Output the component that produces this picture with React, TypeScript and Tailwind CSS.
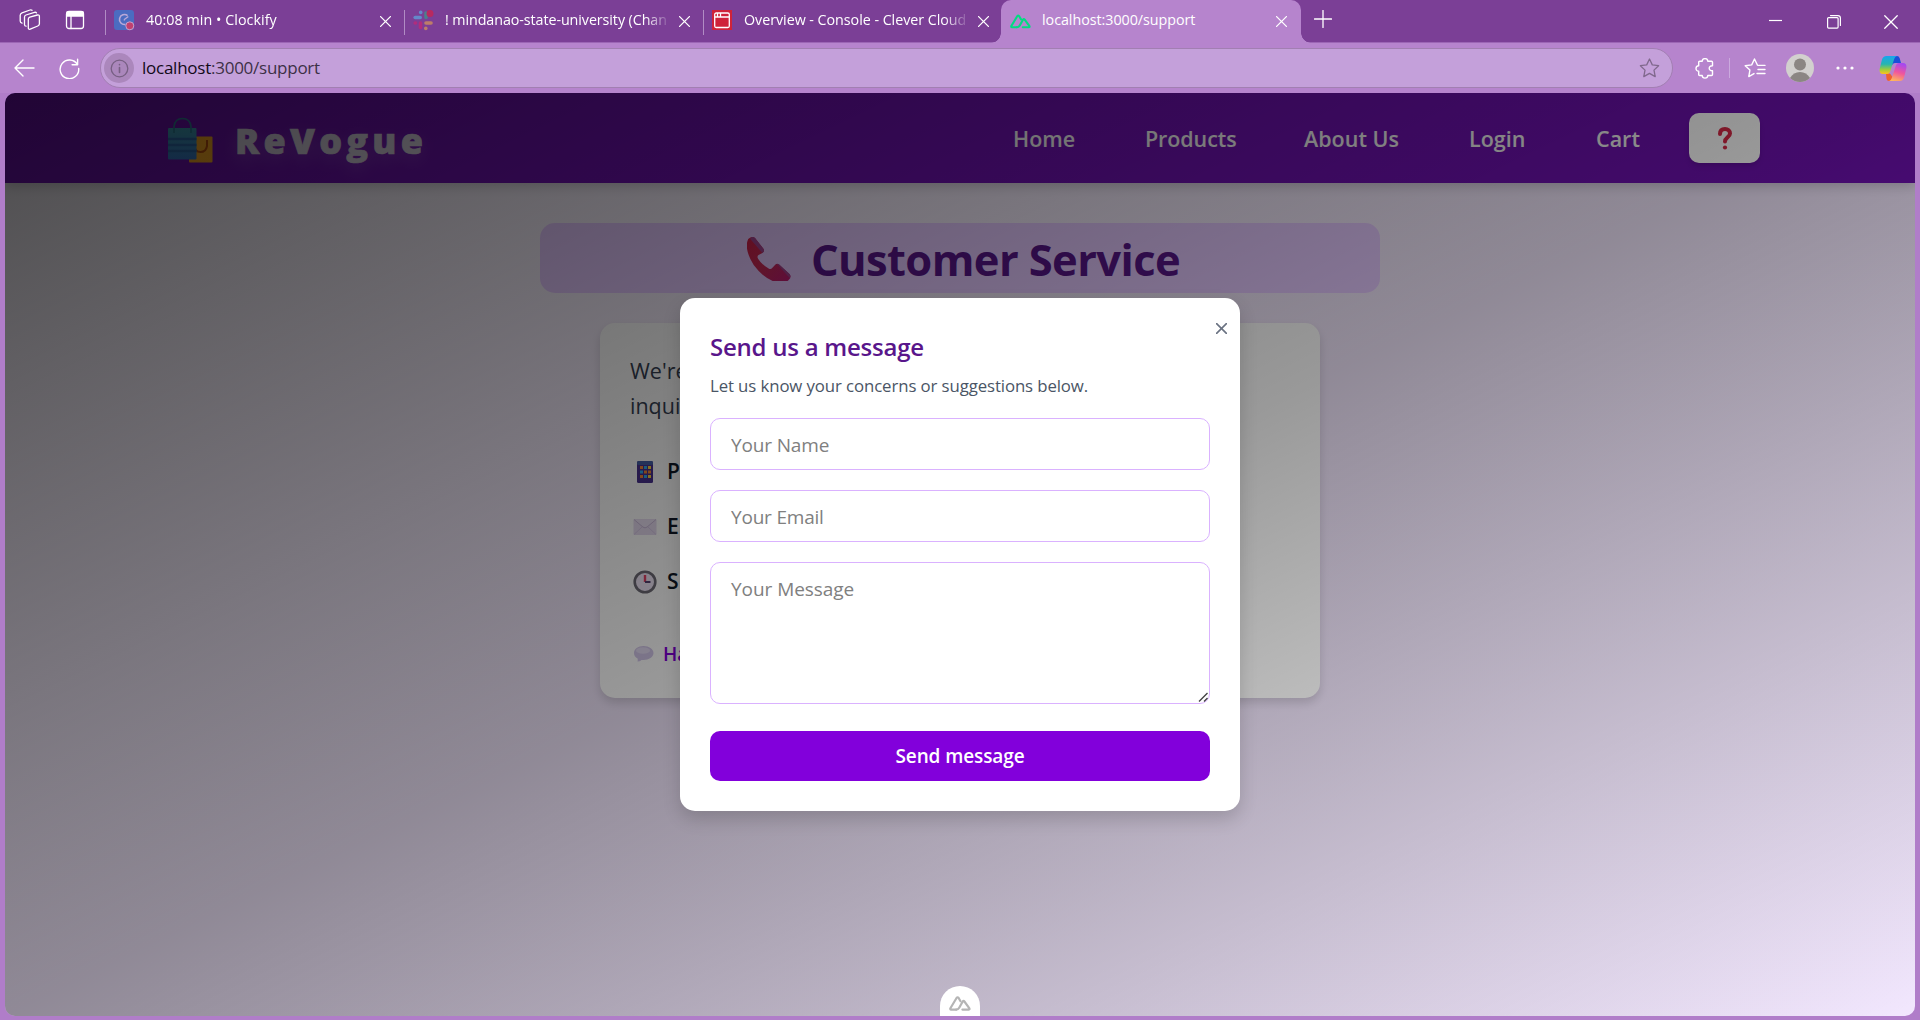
import React from "react";

const line = { fill: "none", stroke: "currentColor", strokeLinecap: "round", strokeLinejoin: "round" } as const;

function Cross({ size = 11, w = 1.3 }: { size?: number; w?: number }) {
  return (
    <svg width={size} height={size} viewBox="0 0 11 11" {...line} strokeWidth={w}>
      <path d="M.6.6l9.8 9.8M10.4.6.6 10.4" />
    </svg>
  );
}

function WorkspacesIcon() {
  return (
    <svg width="22" height="22" viewBox="0 0 22 22" {...line} strokeWidth="1.3">
      <path d="M9.300 10.100q.1-1.500 1.500-2L18.400 6q2.200-.4 2 1.600v7.300q-.1 1.500-1.600 2.100L11.200 20.200q-1.900.5-1.900-1.500z" />
      <path d="M17.500 3.900q-.7-.9-2-.5L7 6q-1.500.6-1.500 2v7.700q.1 1.500 1.600 1.500" />
      <path d="M13 1.300q-.8-.7-2-.3L3 3.800Q1.300 4.500 1.200 6.200v5.700q0 1.700 1.800 2.300" />
    </svg>
  );
}

function TabActionsIcon() {
  return (
    <svg width="20" height="20" viewBox="0 0 20 20" {...line} strokeWidth="1.3">
      <rect x="1.500" y="1.500" width="17" height="17" rx="2.500" />
      <path d="M2 2h16v4H2z" fill="currentColor" />
      <path d="M6 6v12.500" />
    </svg>
  );
}

function ClockifyIcon() {
  return (
    <svg width="21" height="21" viewBox="0 0 21 21">
      <rect width="20" height="20" rx="3" fill="#4b6cc1" />
      <path d="M13.600 5.600A5 5 0 1 0 11.500 14.400" fill="none" stroke="#b9a9d8" strokeWidth="1.600" />
      <path d="M10.300 9.500l4-3M9.700 9.800h1.300" stroke="#b9a9d8" strokeWidth="1.300" />
      <circle cx="15.800" cy="15.800" r="4" fill="#c0406f" stroke="#c9a0cf" strokeWidth="1" />
    </svg>
  );
}

function SlackIcon() {
  return (
    <svg width="21" height="21" viewBox="0 0 21 21" strokeLinecap="round" strokeWidth="3.600">
      <path d="M2.200 7.500h5" stroke="#6588c9" />
      <path d="M7.700 2.200v.3" stroke="#6588c9" />
      <path d="M13 3v4.500" stroke="#4c7f8c" />
      <path d="M7.500 13v4.500" stroke="#b02d7d" />
      <path d="M2.200 13h.3" stroke="#b02d7d" />
      <path d="M13 13h5" stroke="#bd7d68" />
      <path d="M12.800 18.200v.2" stroke="#bd7d68" />
      <circle cx="17" cy="3.400" r="3.500" fill="#b72a60" />
    </svg>
  );
}

function CleverIcon() {
  return (
    <svg width="20" height="20" viewBox="0 0 20 20" fill="none" stroke="#fff" strokeWidth="1.300">
      <rect width="20" height="20" fill="#cf2339" stroke="none" />
      <rect x="2.700" y="3" width="14.600" height="14.500" rx="1.500" />
      <path d="M2.700 7h14.600M5.500 3v4M8.500 3v4" />
    </svg>
  );
}

function NuxtMark({ w, h, stroke = 2 }: { w: number; h: number; stroke?: number }) {
  return (
    <svg width={w} height={h} viewBox="0 0 22 15" {...line} strokeWidth={stroke}>
      <path d="M7.200 13.600H2.200q-1.300-.2-.8-1.400L7.700 1.800q.9-1.100 1.800 0l2 3.400" />
      <path d="M7.200 13.600q2 0 3-1.800L13.700 5.500q.8-1.200 1.700 0l5 6.900q.5 1-.7 1.200h-6.300" />
    </svg>
  );
}

function ShoppingBags() {
  return (
    <svg width="46" height="46" viewBox="0 0 46 46">
      <defs>
        <linearGradient id="bag" x1="0" y1="0" x2="0" y2="1">
          <stop offset="0" stopColor="#3f9fb4" />
          <stop offset="1" stopColor="#3779c6" />
        </linearGradient>
      </defs>
      <rect x="22" y="19.500" width="23.500" height="26" rx="1" fill="#f7a823" />
      <path d="M27.500 23v6q.5 6 6 6t6.500-6v-6" fill="none" stroke="#b9500e" strokeWidth="2" />
      <rect x="1" y="11" width="28.500" height="31.500" rx="1" fill="url(#bag)" />
      <path d="M1 22h28.500M1 28h28.500M1 34h28.500" stroke="#2f6cab" strokeWidth="2.400" />
      <path d="M7 16V9.500Q8 1.500 15.500 1.500T24 9.500V16" fill="none" stroke="#2e7f98" strokeWidth="1.700" />
    </svg>
  );
}

function Phone() {
  return (
    <svg width="45" height="45" viewBox="1 0 37 42.500" preserveAspectRatio="none">
      <defs>
        <linearGradient id="ph" x1="0" y1="0" x2="1" y2="1">
          <stop offset="0" stopColor="#d01f48" />
          <stop offset=".5" stopColor="#c92c58" />
          <stop offset="1" stopColor="#c01a78" />
        </linearGradient>
      </defs>
      <path d="M2 2.800Q5-.3 7.600 1.800L14.500 12q1.400 2.400-.8 4L10.500 18q-1.500 1.300-.4 3.400 3.300 6 9 9.600 1.600.8 2.800-.9l2.500-3.200q1.300-1.300 3-.1l8.500 9q2.100 2.500-.5 5.500-2.500 3.500-8.500 3Q15 41 6.500 27.500-1.800 12 2 2.800z" fill="url(#ph)" />
      <path d="M3.500 2.500 5 1q1.500-.5 2.600.8L14.500 12q1.400 2.400-.8 4zM25.700 26.500q.9-.4 1.700.3l8.500 9q1.300 1.700.2 3.900z" fill="#a34592" />
    </svg>
  );
}

function MobileEmoji() {
  return (
    <svg width="24" height="24" viewBox="0 0 24 24">
      <rect x="4" y="1" width="16" height="22" rx="1.500" fill="#4a3291" />
      <rect x="4" y="1" width="16" height="4" rx="1.500" fill="#4560a8" />
      <g fill="#f58a35">
        <path d="M7 6h3v3H7zM15 10.500h3v3h-3zM11 10.500h3v3h-3zM7 15h3v3H7z" />
      </g>
      <g fill="#2fb0f0">
        <path d="M11 6h3v3h-3zM7 10.500h3v3H7zM11 15h3v3h-3z" />
      </g>
      <path d="M15 6h3v3h-3zM15 15h3v3h-3z" fill="#ffd53f" />
    </svg>
  );
}

function MailEmoji() {
  return (
    <svg width="24" height="24" viewBox="0 0 24 24">
      <rect x=".5" y="4" width="23" height="16" rx="1" fill="#e6dbf0" />
      <path d="M1 19.500l8-7.500M23 19.500l-8-7.500" stroke="#d6c7e6" />
      <path d="M1 4.500l9 7.600q2 1.500 4 0l9-7.600" fill="#ebe1f4" stroke="#c9b8d8" />
    </svg>
  );
}

function ClockEmoji() {
  return (
    <svg width="24" height="24" viewBox="0 0 24 24">
      <circle cx="12" cy="12" r="10.300" fill="#efe6f7" stroke="#6f6c77" strokeWidth="2.600" />
      <path d="M12 12V5" stroke="#e34165" strokeWidth="2.400" />
      <path d="M12 12h5.500" stroke="#554273" strokeWidth="2" />
    </svg>
  );
}

function SpeechEmoji() {
  return (
    <svg width="21" height="18" viewBox="0 0 21 18">
      <path d="M10.500 1C16 1 20.500 4 20.500 8s-4.500 7-10 7q-1 0-2-.1Q7 16.500 4.500 16.500 5 15 4.600 13.500 1 11.500 1 8c0-4 4-7 9.500-7z" fill="#d3c7ea" />
      <ellipse cx="10" cy="5.500" rx="7" ry="3.300" fill="#e4dcf4" />
    </svg>
  );
}

function Copilot() {
  return (
    <svg width="28" height="27" viewBox="0 0 28 27">
      <defs>
        <linearGradient id="ca" x1="0" y1="0" x2="0" y2="1">
          <stop offset="0" stopColor="#18a4ee" />
          <stop offset=".45" stopColor="#27b5b0" />
          <stop offset=".75" stopColor="#9dcc3d" />
          <stop offset="1" stopColor="#ffc21a" />
        </linearGradient>
        <linearGradient id="cb" x1=".6" y1="0" x2=".3" y2="1">
          <stop offset="0" stopColor="#a548f0" />
          <stop offset=".5" stopColor="#f0569c" />
          <stop offset="1" stopColor="#ffb65c" />
        </linearGradient>
      </defs>
      <path d="M14 1h4q2 0 2.700 2.300L22 8h-6q-2.500 0-3.300 2.700z" fill="#1a4fd8" />
      <path d="M7 18.500h4l2.500 3.500L12.500 26H10q-2 0-2.500-2z" fill="#f0602f" />
      <path d="M7.500 1H18q-2 .3-2.800 3L11 17q-.7 2-3 2H4q-4 0-3.400-5L3 4.500Q4 1 7.500 1z" fill="url(#ca)" />
      <path d="M20.500 26H10q2-.3 2.800-3L17 10q.7-2 3-2h4q4 0 3.400 5L25 22.500Q24 26 20.500 26z" fill="url(#cb)" />
      <path d="M15.300 8.500h2.200q-1 .5-1.500 2L13 19h-3q1.200-.3 1.700-1.800z" fill="#b684cd" />
    </svg>
  );
}

function Tab({ icon, title, tracking }: { icon: React.ReactNode; title: string; tracking: string }) {
  return (
    <div className="flex h-[42px] w-[299px] items-center">
      <div className="mb-[-2px] h-[25px] w-px bg-[#b18cc4]" />
      <div className="ml-[8px] mb-[2px] w-[21px]">{icon}</div>
      <div className={`ml-[11px] mb-[2px] w-[223px] overflow-hidden whitespace-nowrap [mask-image:linear-gradient(to_right,black_200px,transparent_226px)] ${tracking}`}>{title}</div>
      <div className="ml-[11px]"><Cross /></div>
    </div>
  );
}

function TitleBar() {
  return (
    <div className="flex h-[43px] border-b border-[#9c66b5] bg-[#7b3f96] text-[14.3px] text-white">
      <div className="flex w-[105px] items-center pl-[19px] pb-[3px]">
        <WorkspacesIcon />
        <div className="ml-[24px]"><TabActionsIcon /></div>
      </div>
      <Tab icon={<ClockifyIcon />} title="40:08 min • Clockify" tracking="tracking-[0.05px]" />
      <Tab icon={<SlackIcon />} title="! mindanao-state-university (Chan" tracking="tracking-[-0.08px]" />
      <Tab icon={<CleverIcon />} title="Overview - Console - Clever Cloud" tracking="tracking-[-0.04px]" />
      <div className="relative -mr-px flex h-[43px] w-[300px] items-center rounded-t-[10px] bg-[#b684cd] pb-px -ml-[1px]">
        <div className="absolute bottom-0 -left-[10px] size-[10px] bg-[radial-gradient(circle_at_0_0,transparent_9.5px,#b684cd_10px)]" />
        <div className="absolute bottom-0 -right-[10px] size-[10px] bg-[radial-gradient(circle_at_100%_0,transparent_9.5px,#b684cd_10px)]" />
        <div className="ml-[9px] text-[#00dc82]"><NuxtMark w={21} h={15} stroke={2.2} /></div>
        <div className="ml-[11px] mb-[2px] w-[234px] tracking-[-0.04px]">localhost:3000/support</div>
        <Cross />
      </div>
      <div className="ml-[14px] flex flex-1 items-center">
        <svg width="18" height="18" viewBox="0 0 18 18" {...line} strokeWidth="1.300" className="mb-[4px]"><path d="M9 .5v17M.5 9h17" /></svg>
      </div>
      <div className="flex w-[151px] items-start justify-between pr-[22px] pt-[15px]">
        <svg width="14" height="14" viewBox="0 0 14 14"><path d="M0 5.500h13" stroke="white" strokeWidth="1.200" /></svg>
        <svg width="14" height="14" viewBox="0 0 14 14" {...line} strokeWidth="1.200"><rect x=".6" y="2.600" width="10.500" height="10.500" rx="1" /><path d="M3.500.6h7.400q2.500 0 2.500 2.500v7.400" /></svg>
        <Cross size={14} w={1} />
      </div>
    </div>
  );
}

function Toolbar() {
  return (
    <div className="flex h-[50px] items-center bg-[#b684cd] text-white">
      <svg width="21" height="18" viewBox="0 0 21 18" {...line} strokeWidth="1.400" className="ml-[14px]"><path d="M20 9H1M9 1 1 9l8 8" /></svg>
      <svg width="21" height="21" viewBox="0 0 21 21" {...line} strokeWidth="1.400" className="ml-[24px]"><path d="M18.400 6.500A9.300 9.300 0 1 0 19.700 10.500M18.600 1.200v5.600h-5.500" /></svg>
      <div className="ml-[20px] flex h-[40px] w-[1573px] items-center rounded-full border border-[#a27fb2] bg-[#c4a0da]">
        <div className="ml-[3px] flex size-[30px] items-center justify-center rounded-full bg-[#ab87bc] text-[#775f83]">
          <svg width="19" height="19" viewBox="0 0 19 19" {...line} strokeWidth="1.300"><circle cx="9.500" cy="9.500" r="8.300" /><path d="M9.500 8.500v5M9.500 5.600v.2" strokeWidth="1.600" /></svg>
        </div>
        <div className="ml-[8px] flex-1 text-[17px] tracking-[-0.25px] text-[#3d3046] pb-px"><span className="text-[#120a18]">localhost</span>:3000/support</div>
        <svg width="21" height="20" viewBox="0 0 21 20" {...line} strokeWidth="1.300" className="mr-[12px] text-[#80688d]"><path d="M10.500 1l2.800 5.900 6.300.8-4.600 4.400 1.200 6.500-5.700-3.200-5.700 3.200L6 12.100 1.400 7.700l6.300-.8z" /></svg>
      </div>
      <svg width="20" height="21" viewBox="0 0 20 21" {...line} strokeWidth="1.400" className="ml-[22px]"><path d="M3.700 4.200q0-1 1-1h2.500C7.300-.2 12.700-.2 12.800 3.200h3.700q1 0 1 1v3.500c-4.400-.2-4.400 5.300 0 5v3.800q0 1-1 1h-3.700c-.2 3.500-5.400 3.500-5.600 0H4.700q-1 0-1-1v-3.300C.1 13.200.1 7.900 3.700 7.800z" /></svg>
      <div className="ml-[14px] h-[20px] w-px bg-[#cbaade]" />
      <svg width="22" height="20" viewBox="0 0 22 20" {...line} strokeWidth="1.400" className="ml-[14px]"><path d="M13.500 7.200 10.500 1 7.700 6.900 1.200 7.700l4.700 4.400L4.800 18.600l5.200-3M14.500 7.400h6.500M14 11.500h7M13 15.500h8" /></svg>
      <div className="ml-[20px] size-[28px] overflow-hidden rounded-full bg-[#d2d0ce]">
        <svg width="28" height="28" viewBox="0 0 28 28" fill="#8b8683"><circle cx="14" cy="10.500" r="6" /><path d="M4 24q3.500-6 10-6t10 6v4H4z" /></svg>
      </div>
      <svg width="18" height="4" viewBox="0 0 18 4" fill="white" className="ml-[22px]"><circle cx="2" cy="2" r="1.600" /><circle cx="9" cy="2" r="1.600" /><circle cx="16" cy="2" r="1.600" /></svg>
      <div className="ml-[25px]"><Copilot /></div>
    </div>
  );
}

function Navbar() {
  return (
    <nav className="relative flex h-[90px] items-center bg-[#6e11b0] pl-[162px] text-[21.500px] font-semibold text-[#f1f1f1] shadow-[0_4px_10px_rgba(0,0,0,.16)]">
      <div className="mt-[3px]"><ShoppingBags /></div>
      <div className="ml-[22px] mt-[5px] w-[778px] text-[36px] font-extrabold tracking-[4.200px] text-[#d6d0df] [-webkit-text-stroke:0.700px_#d6d0df] [text-shadow:0_6px_18px_rgba(255,255,255,.18)]">ReVogue</div>
      <div className="mt-[2px] flex">
        <div className="w-[132px]">Home</div>
        <div className="w-[159px] tracking-[-0.1px]">Products</div>
        <div className="w-[165px]">About Us</div>
        <div className="w-[127px]">Login</div>
        <div className="w-[93px]">Cart</div>
      </div>
      <div className="flex h-[50px] w-[71px] items-center justify-center rounded-[10px] bg-white shadow-md">
        <svg width="16" height="24" viewBox="0 0 16 24" fill="none"><path d="M3 8C3 4.300 5 3 8 3s5 1.800 5 4.500c0 3.700-5 4-5 8" stroke="#d92846" strokeWidth="4" strokeLinecap="round" /><circle cx="8" cy="21.500" r="2.100" fill="#d92846" /></svg>
      </div>
    </nav>
  );
}

function Row({ icon, text }: { icon: React.ReactNode; text: string }) {
  return (
    <div className="flex h-[55px] items-center pl-[3px]">
      {icon}
      <span className="ml-[10px] text-[21px] font-semibold text-[#101828]">{text}</span>
    </div>
  );
}

function SupportPage() {
  return (
    <div className="flex flex-col items-center">
      <h1 className="mt-[40px] flex h-[70px] w-[840px] items-center justify-center rounded-[15px] bg-[#e4c8ff] pl-[7px] text-[43.500px] font-bold tracking-[-0.6px] text-[#59168b]">
        <Phone />
        <span className="ml-[19px] pt-[4px]">Customer Service</span>
      </h1>
      <div className="mt-[30px] h-[375px] w-[720px] rounded-[15px] bg-white p-[30px] shadow-[0_5px_10px_rgba(0,0,0,.14)]">
        <p className="text-[21.500px] leading-[35px] text-[#364153]">We're<br />inqui</p>
        <div className="mt-[21px]">
          <Row icon={<MobileEmoji />} text="P" />
          <Row icon={<MailEmoji />} text="E" />
          <Row icon={<ClockEmoji />} text="S" />
        </div>
        <div className="mt-[31px] flex items-center pl-[3px] text-[19px] font-semibold text-[#8200db]">
          <SpeechEmoji />
          <span className="ml-[9px]">Ha</span>
        </div>
      </div>
    </div>
  );
}

function MessageModal() {
  const field = "block w-full rounded-[10px] border border-[#dab2ff] bg-white px-[20px] text-[19px] text-black outline-none placeholder:text-[#808080]";
  return (
    <div className="relative h-[513px] w-[560px] rounded-[15px] bg-white p-[30px] shadow-[0_8px_18px_rgba(0,0,0,.16)]">
      <button className="absolute right-[13px] top-[25px] text-[#6a7282]"><Cross w={1.6} /></button>
      <h2 className="mt-[1px] text-[24px] font-semibold leading-[36px] tracking-[-0.24px] text-[#59168b]">Send us a message</h2>
      <p className="mt-[8px] text-[16.800px] leading-[25px] tracking-[-0.1px] text-[#4a5565]">Let us know your concerns or suggestions below.</p>
      <input className={`mt-[20px] h-[52px] pt-[2px] tracking-[-0.15px] ${field}`} placeholder="Your Name" />
      <input className={`mt-[20px] h-[52px] pt-[2px] tracking-[-0.2px] ${field}`} placeholder="Your Email" />
      <div className="relative mt-[20px]">
        <textarea className={`h-[142px] resize-none pt-[11px] leading-[30px] tracking-[-0.05px] ${field}`} placeholder="Your Message" />
        <svg width="10" height="10" viewBox="0 0 10 10" className="absolute bottom-[2px] right-[2px]" stroke="#444" strokeWidth="1.400"><path d="M1 9.500 9.500 1M6 9.500 9.500 6" /></svg>
      </div>
      <button className="mt-[27px] block h-[50px] w-full rounded-[10px] bg-[#8200db] pt-[1px] text-[19px] font-semibold tracking-[-0.1px] text-white">Send message</button>
    </div>
  );
}

export default function App() {
  return (
    <div className="flex h-[1020px] w-[1920px] flex-col overflow-hidden bg-[#b07dc9] font-['Open_Sans',sans-serif]">
      <TitleBar />
      <Toolbar />
      <main className="relative mx-[5px] h-[923px] overflow-hidden rounded-[10px] bg-linear-to-br from-[#fbf8fd] via-[#f0e5fb] to-[#f2e7fe]">
        <Navbar />
        <SupportPage />
        <div className="absolute inset-0 flex items-center justify-center bg-linear-to-br from-black/70 via-black/40 to-transparent">
          <MessageModal />
        </div>
        <div className="absolute bottom-0 left-[935px] flex h-[30px] w-[40px] items-center justify-center rounded-t-full bg-white pt-[4px] text-[#b5b5b5]">
          <NuxtMark w={22} h={15} stroke={2.2} />
        </div>
      </main>
    </div>
  );
}
